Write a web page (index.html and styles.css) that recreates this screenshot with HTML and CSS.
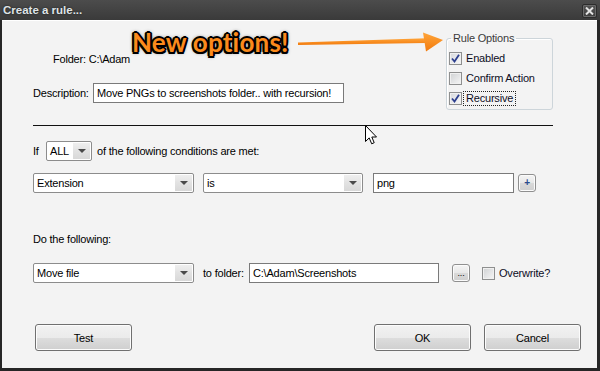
FILE: index.html
```html
<!DOCTYPE html>
<html lang="en">
<head>
  <meta charset="UTF-8" />
  <title>Create a rule...</title>
  <link rel="stylesheet" href="styles.css">
</head>
<body>
  <div class="window">
    <div class="titlebar">
      <span class="title">Create a rule...</span>
      <span class="close">
        <svg width="9" height="8" viewBox="0 0 9 8"><path d="M1 0.5 L8 7.5 M8 0.5 L1 7.5" stroke="#e4e4e4" stroke-width="2" /></svg>
      </span>
    </div>

    <div class="dialog">
      <!-- annotation layered over the dialog -->
      <div class="callout">New options!</div>
      <svg class="callout-arrow" width="150" height="24" viewBox="0 0 150 24">
        <defs>
          <linearGradient id="orange" x1="0" y1="0" x2="0" y2="1">
            <stop offset="0" stop-color="#ffa53a" />
            <stop offset="1" stop-color="#f27a0c" />
          </linearGradient>
        </defs>
        <polygon points="2,12.5 130,8.3 130,12.9 2,15" fill="url(#orange)" />
        <polygon points="127,2.5 147,10 130,21.5" fill="url(#orange)" />
      </svg>
      <svg class="cursor" width="13" height="21" viewBox="0 0 13 21">
        <path d="M0.5 0.5 L0.5 16.5 L4.2 12.9 L6.7 18.8 L9.2 17.7 L6.8 12 L11.5 12 Z" fill="#fff" stroke="#000" stroke-width="1" />
      </svg>

      <div class="top">
        <div class="folder-info">
          <div class="folder">Folder: C:\Adam</div>
          <div class="desc-row">
            <span class="desc-label">Description:</span>
            <div class="textbox desc">Move PNGs to screenshots folder.. with recursion!</div>
          </div>
        </div>

        <fieldset class="options">
          <legend>Rule Options</legend>
          <div class="check">
            <span class="box checked"><svg width="9" height="9" viewBox="0 0 9 9"><path d="M1 4.5 L3.5 7.5 L8 0.8" fill="none" stroke="#2d3f8e" stroke-width="1.8" /></svg></span>
            <span class="check-text">Enabled</span>
          </div>
          <div class="check">
            <span class="box"></span>
            <span class="check-text">Confirm Action</span>
          </div>
          <div class="check">
            <span class="box checked"><svg width="9" height="9" viewBox="0 0 9 9"><path d="M1 4.5 L3.5 7.5 L8 0.8" fill="none" stroke="#2d3f8e" stroke-width="1.8" /></svg></span>
            <span class="check-text focus">Recursive</span>
          </div>
        </fieldset>
      </div>

      <div class="divider"></div>

      <div class="row if-row">
        <span class="if-label">If</span>
        <div class="combo all"><span class="combo-text">ALL</span><span class="combo-btn"></span></div>
        <span class="if-text">of the following conditions are met:</span>
      </div>

      <div class="row cond-row">
        <div class="combo field"><span class="combo-text">Extension</span><span class="combo-btn"></span></div>
        <div class="combo operator"><span class="combo-text">is</span><span class="combo-btn"></span></div>
        <div class="textbox value">png</div>
        <div class="mini-btn plus">+</div>
      </div>

      <div class="do-label">Do the following:</div>

      <div class="row action-row">
        <div class="combo field"><span class="combo-text">Move file</span><span class="combo-btn"></span></div>
        <span class="to-label">to folder:</span>
        <div class="textbox target">C:\Adam\Screenshots</div>
        <div class="mini-btn browse">...</div>
        <div class="check overwrite">
          <span class="box"></span>
          <span class="check-text">Overwrite?</span>
        </div>
      </div>

      <div class="buttons">
        <div class="btn test">Test</div>
        <div class="btn">OK</div>
        <div class="btn">Cancel</div>
      </div>
    </div>
  </div>
</body>
</html>
```

FILE: styles.css
```css
* {
  box-sizing: border-box;
  margin: 0;
  padding: 0;
}

body {
  font-family: 'Liberation Sans', Arial, sans-serif;
  font-size: 11px;
  letter-spacing: -0.2px;
  color: #000;
  background: #2a2a2a;
}

.window {
  width: 600px;
  height: 371px;
  display: flex;
  flex-direction: column;
  background: #262626;
}

.titlebar {
  height: 20px;
  flex: none;
  display: flex;
  align-items: center;
  justify-content: space-between;
  padding: 0 3px 0 3px;
  background: linear-gradient(to bottom, #4c4c4c, #3a3a3a);
}

.title {
  font-weight: bold;
  font-size: 11.5px;
  letter-spacing: 0;
  color: #dfe3e6;
  text-shadow: 0 0 2px #1a1a1a;
}

.close {
  width: 15px;
  height: 14px;
  display: flex;
  align-items: center;
  justify-content: center;
  background: linear-gradient(to bottom, #555, #3e3e3e);
  border: 1px solid #2c2c2c;
  box-shadow: inset 0 0 0 1px #6a6a6a;
  border-radius: 2px;
  margin-top: 1px;
}

.dialog {
  flex: 1;
  position: relative;
  margin: 0 3px 3px 2px;
  border-top: 1px solid #fff;
  background: #f3f3f3;
  padding: 0 15px 0 31px;
}

/* annotation */
.callout {
  position: absolute;
  left: 130px;
  top: 8px;
  font-family: Lato, 'Open Sans', sans-serif;
  font-weight: 700;
  font-size: 26px;
  line-height: 26px;
  letter-spacing: 0.2px;
  color: #fb8a1c;
  white-space: nowrap;
  text-shadow:
    -1.5px -1.5px 0 #000, 1.5px -1.5px 0 #000, -1.5px 1.5px 0 #000, 1.5px 1.5px 0 #000,
    0 -2px 0 #000, 0 2px 0 #000, -2px 0 0 #000, 2px 0 0 #000,
    0 0 4px #000;
}

.callout-arrow {
  position: absolute;
  left: 294px;
  top: 9px;
}

.cursor {
  position: absolute;
  left: 363px;
  top: 104px;
}

/* top block */
.top {
  display: flex;
  justify-content: space-between;
  align-items: flex-start;
  margin-right: 29px;
}

.folder-info {
  padding-top: 32px;
}

.folder {
  margin-left: 20px;
  line-height: 13px;
}

.desc-row {
  margin-top: 17px;
  display: flex;
  align-items: center;
}

.desc-label {
  width: 60px;
}

.textbox {
  height: 20px;
  border: 1px solid #7a7a7a;
  background: #fff;
  padding-left: 3px;
  line-height: 18px;
  white-space: nowrap;
  overflow: hidden;
}

.desc {
  width: 251px;
}

.options {
  margin-top: 11px;
  width: 107px;
  height: 78px;
  border: 1px solid #cdd5da;
  border-radius: 3px;
  box-shadow: inset 1px 1px 0 #fff;
  padding: 4px 2px 0 2px;
}

.options legend {
  margin-left: 2px;
  padding: 0 2px;
  line-height: 12px;
  color: #3b3b3b;
}

.check {
  display: flex;
  align-items: center;
  height: 20px;
}

.box {
  width: 13px;
  height: 13px;
  flex: none;
  border: 1px solid #8e8f8f;
  background: linear-gradient(135deg, #cfd1d3, #f6f6f6);
  box-shadow: inset 0 0 0 1px #f0f0f0;
  display: flex;
  align-items: center;
  justify-content: center;
  margin-right: 2px;
}

.box.checked {
  background: linear-gradient(135deg, #d6d8dc, #f8f8f8);
}

.check-text {
  padding: 0 2px;
  line-height: 13px;
  color: #0d0d1e;
}

.focus {
  outline: 1px dotted #222;
}

.divider {
  margin-top: 15px;
  margin-right: 29px;
  height: 1px;
  background: #111;
}

.row {
  display: flex;
  align-items: center;
  height: 20px;
}

.if-row {
  margin-top: 15px;
}

.if-label {
  width: 13px;
}

.combo {
  display: flex;
  height: 20px;
  border: 1px solid #8c8c8c;
  border-radius: 2px;
  background: #fff;
}

.combo-text {
  flex: 1;
  padding-left: 3px;
  line-height: 18px;
  white-space: nowrap;
}

.combo-btn {
  width: 17px;
  margin: 1px;
  background: linear-gradient(to bottom, #efefef, #e2e2e2 50%, #d8d8d8);
  display: flex;
  align-items: center;
  justify-content: center;
}

.combo-btn::after {
  content: "";
  border-left: 4px solid transparent;
  border-right: 4px solid transparent;
  border-top: 4px solid #4a4a4a;
}

.all {
  width: 46px;
}

.if-text {
  margin-left: 5px;
}

.cond-row {
  margin-top: 12px;
}

.field {
  width: 161px;
}

.operator {
  width: 160px;
  margin-left: 9px;
}

.value {
  width: 141px;
  margin-left: 10px;
}

.mini-btn {
  width: 18px;
  height: 18px;
  border: 1px solid #8f8f8f;
  border-radius: 3px;
  background: linear-gradient(to bottom, #f4f4f4, #e8e8e8 50%, #d9d9d9 51%, #cfcfcf);
  box-shadow: inset 0 0 0 1px #fbfbfb;
  display: flex;
  align-items: center;
  justify-content: center;
  line-height: 1;
}

.plus {
  margin-left: 4px;
  font-size: 10px;
  font-weight: bold;
  color: #2a4b8d;
}

.do-label {
  margin-top: 40px;
  line-height: 13px;
}

.action-row {
  margin-top: 17px;
}

.to-label {
  margin-left: 9px;
  width: 46px;
}

.target {
  width: 190px;
}

.browse {
  margin-left: 13px;
  font-size: 9px;
  align-items: flex-end;
  padding-bottom: 3px;
}

.overwrite {
  margin-left: 12px;
}

.buttons {
  margin-top: 41px;
  display: flex;
  gap: 13px;
  padding-left: 2px;
  padding-right: 1px;
}

.btn {
  width: 97px;
  height: 27px;
  border: 1px solid #707070;
  border-radius: 3px;
  background: linear-gradient(to bottom, #f2f2f2, #ebebeb 50%, #dddddd 51%, #cfcfcf);
  box-shadow: inset 0 0 0 1px #fcfcfc;
  display: flex;
  align-items: center;
  justify-content: center;
}

.btn.test {
  margin-right: auto;
}
```
